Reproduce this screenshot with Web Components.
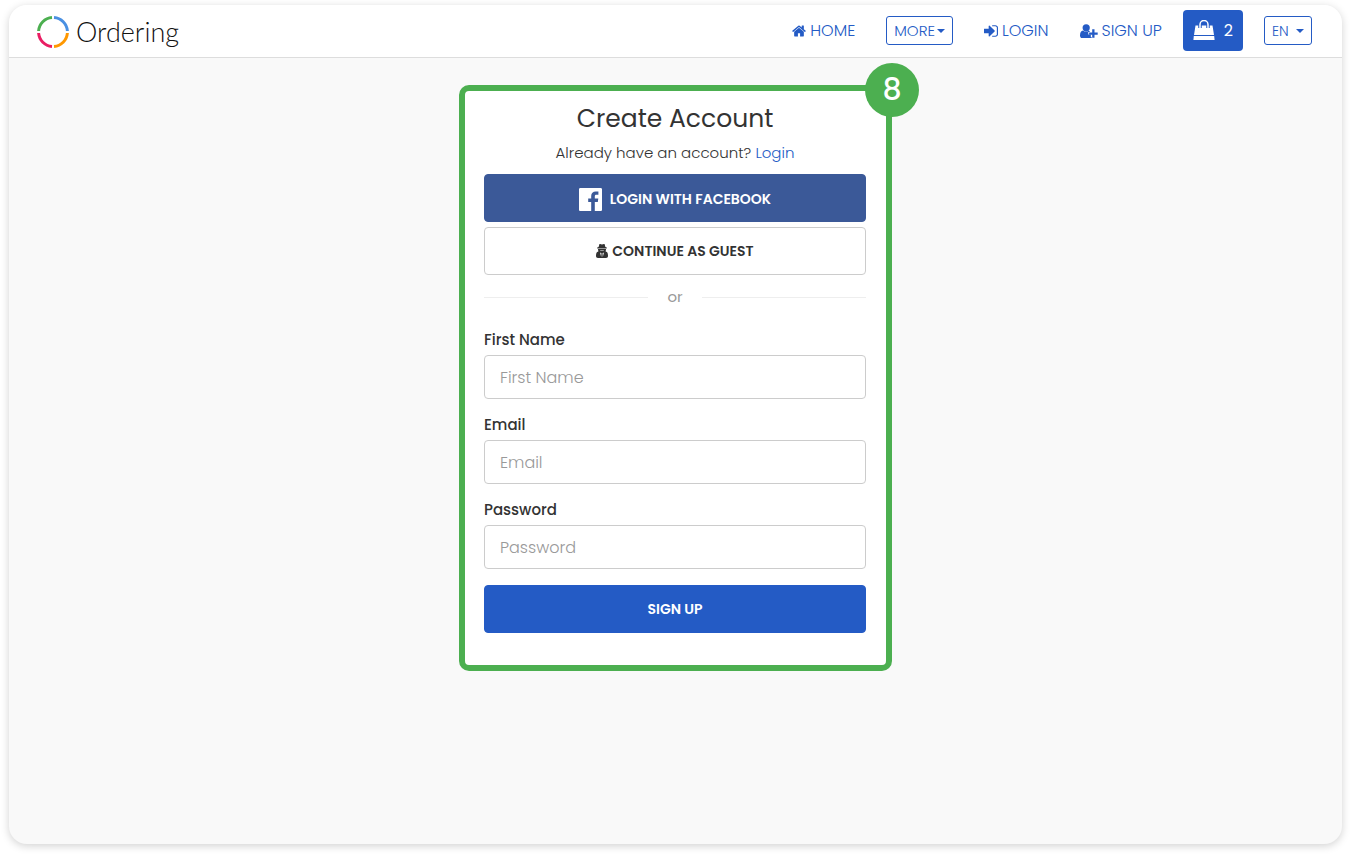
<!DOCTYPE html>
<html lang="en">
<head>
<meta charset="utf-8">
<meta name="viewport" content="width=device-width, initial-scale=1">
<title>Ordering - Create Account</title>
<style>
    body {
        margin: 0;
        background-color: #fff;
        color: #333;
        font-family: Poppins, Inter, "Liberation Sans", sans-serif;
        font-size: 15px;
    }
</style>
</head>
<body>

<ordering-app></ordering-app>

<script>
const ICONS = {
    home: ['0 128 1664 1536', `<path d="M1408 992v480q0 26-19 45t-45 19h-384v-384h-256v384h-384q-26 0-45-19t-19-45v-480q0-1 .5-3t.5-3l575-474 575 474q1 2 1 6zm223-69l-62 74q-8 9-21 11h-3q-13 0-21-7l-692-577-692 577q-12 8-24 7-13-2-21-11l-62-74q-8-10-7-23.5t11-21.5l719-599q32-26 76-26t76 26l244 204v-195q0-14 9-23t23-9h192q14 0 23 9t9 23v408l219 182q10 8 11 21.5t-7 23.5z"/>`],
    login: ['128 128 1536 1536', `<path d="M1312 896q0 26-19 45l-544 544q-19 19-45 19t-45-19-19-45v-288h-448q-26 0-45-19t-19-45v-384q0-26 19-45t45-19h448v-288q0-26 19-45t45-19 45 19l544 544q19 19 19 45zm352-352v704q0 119-84.5 203.5t-203.5 84.5h-320q-13 0-22.5-9.5t-9.5-22.5q0-4-1-20t-.5-26.5 3-23.5 10-19.5 20.5-6.5h320q66 0 113-47t47-113v-704q0-66-47-113t-113-47h-312l-11.5-1-11.5-3-8-5.5-7-9-2-13.5q0-4-1-20t-.5-26.5 3-23.5 10-19.5 20.5-6.5h320q119 0 203.5 84.5t84.5 203.5z"/>`],
    signup: ['0 0 18 14', `<circle cx="6.2" cy="3.8" r="3.6"/><path d="M3 6.4C1 6.8 0 8.500 0 11.400 0 13 .9 14 2.300 14h8c.9 0 1.500-.3 1.900-.9h-1.400v-2.500H8.300V7.900h1.600c-.2-.8-.6-1.300-1-1.500-1.600 1.600-4.200 1.600-5.900 0z"/><path d="M12.200 5.300h2.300v3.100h3.200v2.300h-3.200v3.100h-2.300v-3.100H9.100V8.400h3.100z"/>`],
    bag: ['0 0 22 22', `<path d="M2.500 5.500h17L21 15H1zM.8 16h20.400l.4 4H.4z"/><path d="M7 5v3M15 5v3" stroke="#245bc5" stroke-width="3.500"/><path d="M7 8.500V4.500a4 4 0 0 1 8 0v4" fill="none" stroke="currentColor" stroke-width="1.500"/>`],
    facebook: ['0 0 23 23', `<path fill-rule="evenodd" d="M1.300 0h20.400c.7 0 1.300.6 1.300 1.300v20.400c0 .7-.6 1.300-1.300 1.300h-5.900v-8.900h3l.5-3.500h-3.500V8.400c0-1 .3-1.700 1.700-1.700h1.900V3.600a24 24 0 0 0-2.700-.1c-2.700 0-4.500 1.600-4.500 4.600v2.500h-3v3.500h3V23H1.300C.6 23 0 22.400 0 21.700V1.300C0 .6.6 0 1.300 0z"/>`],
    guest: ['0 0 12 14', `<path d="M2.600 2.900 3.300.5C3.400.1 3.700 0 4.100.1L6 .6 7.900.1c.4-.1.700 0 .8.4l.7 2.400 1.400.6v.9H1.200v-.9zM2 5h8c0 1-.1 1.600-.5 2.200l1.200.7C11.700 8.500 12 10 12 12c0 1.300-.7 2-2 2H2c-1.300 0-2-.7-2-2 0-2 .3-3.500 1.300-4.100l1.200-.7C2.100 6.600 2 6 2 5z"/><path d="M4 8.400l1.500.8L5.200 13zM8 8.400l-1.500.8.3 3.800zM4.200 6.400h3.600v.7H4.200z" fill="#fff"/>`],
    caret: ['0 0 8 4', `<path d="M0 0h8L4 4z"/>`]
};

class UiIcon extends HTMLElement {
    connectedCallback() {
        const [box, shape] = ICONS[this.getAttribute('name')];
        this.attachShadow({mode: 'open'}).innerHTML = `
            <style>
                :host { display: block; flex: none; width: 14px; height: 14px; }
                svg { display: block; width: 100%; height: 100%; fill: currentColor; }
            </style>
            <svg viewBox="${box}" aria-hidden="true">${shape}</svg>
        `;
    }
}

class BrandLogo extends HTMLElement {
    constructor() {
        super();
        this.attachShadow({mode: 'open'}).innerHTML = `
            <style>
                :host { display: block; }
                a {
                    display: flex;
                    align-items: center;
                    gap: 7px;
                    padding-top: 2px;
                    color: #111;
                    font: 300 27px/36px Lato, sans-serif;
                    text-decoration: none;
                }
                svg { width: 32px; height: 32px; fill: none; stroke-width: 3; }
            </style>
            <a href="#">
                <svg viewBox="0 0 32 32" aria-hidden="true">
                    <path d="M1.600 15A14.500 14.500 0 0 1 15 1.600" stroke="#4caf50"/>
                    <path d="M17 1.600A14.500 14.500 0 0 1 30.400 15" stroke="#4a90e2"/>
                    <path d="M30.400 17A14.500 14.500 0 0 1 17 30.400" stroke="#ff9800"/>
                    <path d="M15 30.400A14.500 14.500 0 0 1 1.600 17" stroke="#e91e63"/>
                </svg>
                <span>Ordering</span>
            </a>
        `;
    }
}

class NavLink extends HTMLElement {
    connectedCallback() {
        this.attachShadow({mode: 'open'}).innerHTML = `
            <style>
                :host { display: block; }
                a {
                    display: flex;
                    align-items: center;
                    gap: 4px;
                    color: inherit;
                    line-height: 24px;
                    text-decoration: none;
                    white-space: nowrap;
                }
                ui-icon[name="signup"] { width: 18px; }
            </style>
            <a href="#"><ui-icon name="${this.getAttribute('icon')}"></ui-icon><slot></slot></a>
        `;
    }
}

class SiteHeader extends HTMLElement {
    constructor() {
        super();
        this.attachShadow({mode: 'open'}).innerHTML = `
            <style>
                :host {
                    display: flex;
                    align-items: center;
                    justify-content: space-between;
                    box-sizing: border-box;
                    min-height: 53px;
                    padding: 0 30px 1px 28px;
                    border-bottom: 1px solid #ddd;
                    background-color: #fff;
                    color: #245bc5;
                    font-weight: 300;
                    font-size: 16px;
                }
                nav { display: flex; align-items: center; gap: 21px; }
                .links { display: flex; align-items: center; gap: 31px; }
                button, select {
                    font: inherit;
                    color: inherit;
                    cursor: pointer;
                }
                .outline {
                    display: flex;
                    align-items: center;
                    gap: 2px;
                    box-sizing: border-box;
                    height: 29px;
                    padding: 0 7px;
                    border: 1px solid #245bc5;
                    border-radius: 3px;
                    background-color: #fff;
                    font-size: 15px;
                }
                .outline ui-icon { width: 8px; height: 4px; pointer-events: none; }
                .lang { gap: 7px; font-size: 14px; }
                select {
                    appearance: none;
                    padding: 0;
                    border: 0;
                    background: none;
                }
                .cart {
                    display: flex;
                    align-items: center;
                    gap: 9px;
                    height: 41px;
                    padding: 0 10px;
                    border: 0;
                    border-radius: 4px;
                    background-color: #245bc5;
                    color: #fff;
                    font-weight: 400;
                }
                .cart ui-icon { width: 22px; height: 22px; }
            </style>
            <brand-logo></brand-logo>
            <nav>
                <div class="links">
                    <nav-link icon="home">HOME</nav-link>
                    <button class="outline" type="button">MORE<ui-icon name="caret"></ui-icon></button>
                    <nav-link icon="login">LOGIN</nav-link>
                    <nav-link icon="signup">SIGN UP</nav-link>
                </div>
                <button class="cart" type="button"><ui-icon name="bag"></ui-icon>2</button>
                <div class="outline lang">
                    <select aria-label="Language"><option>EN</option></select>
                    <ui-icon name="caret"></ui-icon>
                </div>
            </nav>
        `;
    }
}

class FormField extends HTMLElement {
    connectedCallback() {
        const label = this.getAttribute('label');
        const type = this.getAttribute('type') || 'text';
        this.attachShadow({mode: 'open'}).innerHTML = `
            <style>
                :host { display: flex; flex-direction: column; gap: 5px; }
                label { font-weight: 500; font-size: 15px; line-height: 21px; }
                input {
                    box-sizing: border-box;
                    width: 100%;
                    height: 44px;
                    padding: 0 15px;
                    border: 1px solid #ccc;
                    border-radius: 4px;
                    background-color: #fff;
                    color: #333;
                    font: inherit;
                    font-size: 16px;
                }
                input::placeholder { color: #999; font-weight: 300; opacity: 1; }
            </style>
            <label for="field">${label}</label>
            <input id="field" type="${type}" placeholder="${label}">
        `;
    }
}

class ActionButton extends HTMLElement {
    constructor() {
        super();
        this.attachShadow({mode: 'open'}).innerHTML = `
            <style>
                :host { display: block; }
                button {
                    display: flex;
                    align-items: center;
                    justify-content: center;
                    gap: 4px;
                    box-sizing: border-box;
                    width: 100%;
                    height: 48px;
                    border: 1px solid #245bc5;
                    border-radius: 4px;
                    background-color: #245bc5;
                    color: #fff;
                    font: inherit;
                    font-weight: 600;
                    font-size: 14px;
                    cursor: pointer;
                }
                :host([kind="facebook"]) button { gap: 8px; padding-top: 3px; border-color: #3b5998; background-color: #3b5998; }
                :host([kind="guest"]) button { border-color: #ccc; background-color: #fff; color: #333; }
            </style>
            <button type="button"><slot name="icon"></slot><slot></slot></button>
        `;
    }
}

/* Outlined box with a numbered badge on its top right corner */
class StepFrame extends HTMLElement {
    connectedCallback() {
        this.attachShadow({mode: 'open'}).innerHTML = `
            <style>
                :host {
                    display: block;
                    position: relative;
                    box-sizing: border-box;
                    padding: 9px 20px 32px 19px;
                    border: 6px solid #4caf50;
                    border-radius: 10px;
                    background-color: #fff;
                }
                .badge {
                    position: absolute;
                    top: -28px;
                    right: -33px;
                    width: 54px;
                    border-radius: 50%;
                    background-color: #4caf50;
                    color: #fff;
                    font-weight: 500;
                    font-size: 30px;
                    line-height: 54px;
                    text-align: center;
                }
            </style>
            <slot></slot>
            <span class="badge">${this.getAttribute('step')}</span>
        `;
    }
}

class SignupForm extends HTMLElement {
    constructor() {
        super();
        this.attachShadow({mode: 'open'}).innerHTML = `
            <style>
                :host { display: block; }
                h1 {
                    margin: 0;
                    font-weight: 400;
                    font-size: 25px;
                    line-height: 38px;
                    text-align: center;
                }
                p { margin: 3px 0 9px; font-weight: 300; line-height: 24px; text-align: center; }
                a { color: #245bc5; text-decoration: none; }
                .social { display: flex; flex-direction: column; gap: 5px; }
                .social ui-icon[name="facebook"] { width: 23px; height: 23px; }
                .social ui-icon[name="guest"] { width: 12px; }
                .or {
                    display: flex;
                    align-items: center;
                    gap: 19px;
                    margin: 11px 0 21px;
                    color: #999;
                    line-height: 22px;
                }
                .or::before, .or::after {
                    content: "";
                    flex: 1;
                    height: 1px;
                    background-color: #eee;
                }
                .fields { display: flex; flex-direction: column; gap: 15px; margin-bottom: 16px; }
            </style>
            <h1>Create Account</h1>
            <p>Already have an account? <a href="#">Login</a></p>
            <div class="social">
                <action-button kind="facebook"><ui-icon slot="icon" name="facebook"></ui-icon>LOGIN WITH FACEBOOK</action-button>
                <action-button kind="guest"><ui-icon slot="icon" name="guest"></ui-icon>CONTINUE AS GUEST</action-button>
            </div>
            <div class="or">or</div>
            <div class="fields">
                <form-field label="First Name"></form-field>
                <form-field label="Email" type="email"></form-field>
                <form-field label="Password" type="password"></form-field>
            </div>
            <action-button>SIGN UP</action-button>
        `;
    }
}

class OrderingApp extends HTMLElement {
    constructor() {
        super();
        this.attachShadow({mode: 'open'}).innerHTML = `
            <style>
                :host {
                    display: flex;
                    box-sizing: border-box;
                    min-height: 100vh;
                    padding: 5px 9px 12px;
                }
                .window {
                    flex: 1;
                    overflow: hidden;
                    border-radius: 18px;
                    background-color: #f9f9f9;
                    box-shadow: 0 2px 8px rgba(0, 0, 0, 0.18);
                }
                main { display: flex; justify-content: center; padding: 27px 16px; }
                step-frame { flex: 0 1 433px; }
            </style>
            <div class="window">
                <site-header></site-header>
                <main>
                    <step-frame step="8"><signup-form></signup-form></step-frame>
                </main>
            </div>
        `;
    }
}

customElements.define('ui-icon', UiIcon);
customElements.define('brand-logo', BrandLogo);
customElements.define('nav-link', NavLink);
customElements.define('site-header', SiteHeader);
customElements.define('form-field', FormField);
customElements.define('action-button', ActionButton);
customElements.define('step-frame', StepFrame);
customElements.define('signup-form', SignupForm);
customElements.define('ordering-app', OrderingApp);
</script>
</body>
</html>
